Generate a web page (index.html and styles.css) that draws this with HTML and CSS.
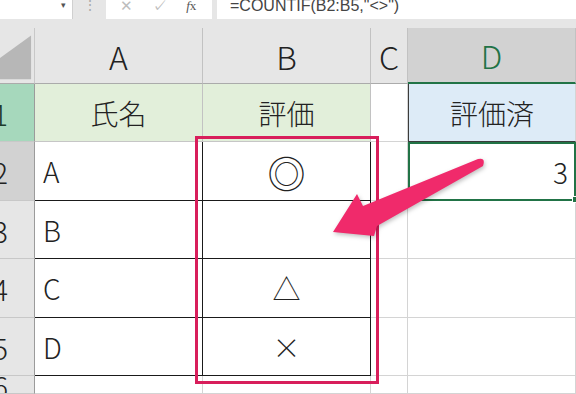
FILE: index.html
```html
<!DOCTYPE html>
<html lang="ja">
<head>
    <meta charset="UTF-8">
    <meta name="viewport" content="width=device-width, initial-scale=1.0">
    <title>COUNTIF</title>
    <link rel="stylesheet" href="styles.css">
</head>
<body>
    <div class="formula-bar">
        <div class="name-box"><span class="drop">&#9662;</span></div>
        <div class="grip">&#8942;</div>
        <div class="buttons">
            <span class="btn">&#10005;</span>
            <span class="btn">&#10003;</span>
            <span class="btn fx"><i>f</i>x</span>
        </div>
        <div class="formula">=COUNTIF(B2:B5,"&lt;&gt;")</div>
    </div>

    <div class="sheet">
        <!-- column headers -->
        <div class="corner">
            <svg width="35" height="56" viewBox="0 0 35 56"><polygon points="32,7 32,52 0,52 0,30" fill="#b7b7b7"/></svg>
        </div>
        <div class="col-head">A</div>
        <div class="col-head">B</div>
        <div class="col-head">C</div>
        <div class="col-head active">D</div>

        <!-- row 1 -->
        <div class="row-head green">1</div>
        <div class="cell title">氏名</div>
        <div class="cell title">評価</div>
        <div class="cell"></div>
        <div class="cell result-head">評価済</div>

        <!-- row 2 -->
        <div class="row-head sel">2</div>
        <div class="cell tb">A</div>
        <div class="cell tb center big">◎</div>
        <div class="cell"></div>
        <div class="cell result">3</div>

        <!-- row 3 -->
        <div class="row-head">3</div>
        <div class="cell tb">B</div>
        <div class="cell tb center"></div>
        <div class="cell"></div>
        <div class="cell"></div>

        <!-- row 4 -->
        <div class="row-head">4</div>
        <div class="cell tb">C</div>
        <div class="cell tb center">△</div>
        <div class="cell"></div>
        <div class="cell"></div>

        <!-- row 5 -->
        <div class="row-head">5</div>
        <div class="cell tb">D</div>
        <div class="cell tb center">×</div>
        <div class="cell"></div>
        <div class="cell"></div>

        <!-- row 6 -->
        <div class="row-head">6</div>
        <div class="cell"></div>
        <div class="cell"></div>
        <div class="cell"></div>
        <div class="cell"></div>
    </div>

    <div class="highlight"></div>

    <svg class="arrow" width="576" height="394" viewBox="0 0 576 394">
        <path d="M333,232 L357,194 L363,206 L478,159 Q486,157 483,166 L377,226 L374,236 Z" fill="#f02a6b"/>
    </svg>
</body>
</html>
```

FILE: styles.css
```css
body {
    margin: 0;
    width: 576px;
    height: 394px;
    overflow: hidden;
    background-color: #e6e6e6;
    font-family: "Noto Sans CJK JP", "Noto Sans", sans-serif;
    color: #222;
    position: relative;
}

.formula-bar {
    display: flex;
    height: 19px;
    margin-bottom: 9px;
    font-family: "Liberation Sans", Arial, sans-serif;
}

.name-box {
    width: 73px;
    background-color: #fff;
    border-right: 1px solid #d0d0d0;
    box-sizing: border-box;
    display: flex;
    justify-content: flex-end;
    padding-right: 6px;
}

.drop {
    font-size: 9px;
    color: #555;
    line-height: 10px;
}

.grip {
    width: 33px;
    text-align: center;
    color: #aaa;
    font-size: 14px;
    line-height: 10px;
}

.buttons {
    width: 106px;
    background-color: #fff;
    display: flex;
    align-items: flex-start;
    justify-content: space-around;
    padding: 0 6px 0 4px;
    box-sizing: border-box;
}

.btn {
    color: #bdbdbd;
    font-size: 15px;
    line-height: 12px;
}

.btn.fx {
    color: #555;
    font-family: "Liberation Serif", serif;
    font-size: 13px;
}

.formula {
    flex: 1;
    margin-left: 5px;
    background-color: #fff;
    color: #444;
    font-size: 16px;
    line-height: 11px;
    padding-left: 13px;
    overflow: hidden;
    white-space: nowrap;
}

.sheet {
    display: grid;
    grid-template-columns: 35px 168px 168px 37px 168px;
    grid-template-rows: 56px 58px 59px 58px 59px 58px 18px;
    background-color: #fff;
}

.sheet > div {
    box-sizing: border-box;
    display: flex;
    align-items: center;
    overflow: hidden;
    white-space: nowrap;
}

.corner {
    background-color: #e6e6e6;
    border-right: 1px solid #c8c8c8;
    border-bottom: 1px solid #ababab;
}

.corner svg {
    display: block;
}

.col-head {
    justify-content: center;
    background-color: #e6e6e6;
    border-right: 1px solid #c2c2c2;
    border-bottom: 1px solid #ababab;
    font-size: 32px;
    font-weight: 300;
}

.col-head.active {
    background-color: #d2d2d2;
    color: #217346;
    border-bottom: 2px solid #217346;
}

.row-head {
    justify-content: flex-end;
    padding-right: 26px;
    background-color: #e6e6e6;
    border-right: 1px solid #9b9b9b;
    border-bottom: 1px solid #c8c8c8;
    font-size: 29px;
    font-weight: 300;
}

.row-head.green {
    background-color: #a6d8bc;
    color: #1d3a2b;
}

.row-head.sel {
    background-color: #d2d2d2;
}

.cell {
    border-right: 1px solid #d4d4d4;
    border-bottom: 1px solid #d4d4d4;
    font-size: 28px;
    font-weight: 300;
    padding-left: 8px;
}

.cell.title {
    justify-content: center;
    padding-left: 0;
    background-color: #e2efda;
    border-right-color: #c2c2c2;
    border-bottom-color: #c6c6c6;
}

.cell.tb {
    border-right-color: #1a1a1a;
    border-bottom-color: #1a1a1a;
}

.cell.center {
    justify-content: center;
    padding-left: 0;
}

.cell.big {
    font-size: 38px;
}

.cell.result-head {
    justify-content: center;
    padding-left: 0;
    background-color: #ddebf7;
    border-left: 1px solid #3b3b3b;
    border-bottom: 1px solid #3b3b3b;
}

.cell.result {
    justify-content: flex-end;
    padding: 0 6px 0 0;
    border: 2px solid #217346;
    position: relative;
    overflow: visible;
}

.cell.result::after {
    content: "";
    position: absolute;
    right: -5px;
    bottom: -4px;
    width: 5px;
    height: 5px;
    background-color: #217346;
    border: 1px solid #fff;
}

.highlight {
    position: absolute;
    left: 195px;
    top: 136px;
    width: 184px;
    height: 248px;
    box-sizing: border-box;
    border: 3px solid #d81e5b;
}

.arrow {
    position: absolute;
    left: 0;
    top: 0;
    filter: drop-shadow(1px 2px 2px rgba(0, 0, 0, 0.25));
}
```
